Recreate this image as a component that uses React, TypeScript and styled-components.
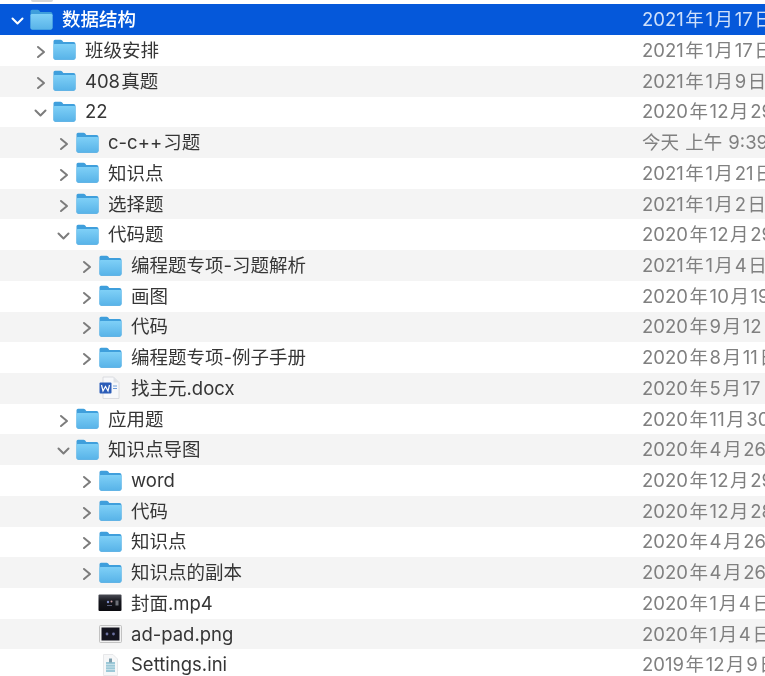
import React from "react";
import styled, { createGlobalStyle } from "styled-components";

const Global = createGlobalStyle`
  html, body { margin: 0; padding: 0; background: #fff; overflow: hidden; }
  #root { width: 765px; height: 676px; overflow: hidden; }
`;

const Page = styled.div`
  width: 765px;
  height: 676px;
  overflow: hidden;
  font-family: "Inter", "Noto Sans CJK SC", sans-serif;
  filter: blur(0.45px);
`;

const ClippedRow = styled.div`
  height: 4.4px;
  padding-left: 31px;
  overflow: hidden;
`;

const ClippedIcon = styled.div`
  width: 22px;
  height: 2px;
  border-radius: 0 0 2px 2px;
  background: #d6d6d6;
`;

const RowBox = styled.div<{ $tone: "sel" | "odd" | "even" }>`
  height: 30.72px;
  display: grid;
  grid-template-columns: 642px 123px;
  align-items: center;
  white-space: nowrap;
  overflow: hidden;
  background: ${(p) => (p.$tone === "sel" ? "#0558da" : p.$tone === "even" ? "#f4f4f4" : "#fff")};
`;

const NameCell = styled.div<{ $depth: number }>`
  display: flex;
  align-items: center;
  padding-left: ${(p) => 9 + p.$depth * 23}px;
`;

const ChevronBox = styled.span`
  width: 15px;
  height: 15px;
  margin-right: 5px;
  display: block;
  flex: none;
`;

const IconBox = styled.span`
  width: 25px;
  height: 24px;
  margin-right: 8px;
  display: block;
  flex: none;
`;

const Name = styled.span<{ $sel: boolean }>`
  font-size: 18.5px;
  line-height: 24px;
  padding-bottom: 1px;
  word-spacing: -4px;
  font-weight: ${(p) => (p.$sel ? 500 : 400)};
  color: ${(p) => (p.$sel ? "#fff" : "#363636")};
`;

const DateCell = styled.span<{ $sel: boolean }>`
  font-size: 18.5px;
  line-height: 24px;
  padding-bottom: 1px;
  word-spacing: -3.6px;
  color: ${(p) => (p.$sel ? "#cfe0fa" : "#808080")};
`;

const Chevron = ({ open, sel }: { open: boolean; sel: boolean }) => (
  <ChevronBox>
    <svg width="15" height="15" viewBox="0 0 15 15" fill="none"
      stroke={sel ? "#fff" : "#7c7c7c"} strokeWidth="2" strokeLinecap="round" strokeLinejoin="round">
      {open ? <path d="M3.5 5.5 L8.5 10.5 L13.5 5.5" /> : <path d="M6 3 L12 8 L6 13" />}
    </svg>
  </ChevronBox>
);

const Folder = ({ id }: { id: string }) => (
  <IconBox>
    <svg width="25" height="24" viewBox="0 0 25 24">
      <defs>
        <linearGradient id={id} x1="0" y1="0" x2="0" y2="1">
          <stop offset="0" stopColor="#7fd0f7" />
          <stop offset="1" stopColor="#58b3e8" />
        </linearGradient>
      </defs>
      <path d="M1.5 3.2 Q1.5 1.7 3 1.7 H8.5 Q9.5 1.7 10.2 2.6 L11.3 3.9 H21.5 Q23.5 3.9 23.5 5.9 V20 Q23.5 21.7 21.5 21.7 H3.3 Q1.5 21.7 1.5 20 Z" fill="#3f9fdc" />
      <path d="M1.5 7.3 Q1.5 5.9 3 5.9 H22 Q23.5 5.9 23.5 7.3 V19.8 Q23.5 21.5 21.6 21.5 H3.4 Q1.5 21.5 1.5 19.8 Z" fill={`url(#${id})`} />
    </svg>
  </IconBox>
);

const WordIcon = () => (
  <IconBox>
    <svg width="25" height="24" viewBox="0 0 25 24">
      <path d="M5 1 H15.5 L21 6.5 V22.5 H5 Z" fill="#f7f8fa" stroke="#d4d6da" strokeWidth="0.8" />
      <path d="M15.5 1 V6.5 H21 Z" fill="#dfe2e6" />
      <rect x="1.5" y="6.5" width="12" height="11" rx="1" fill="#2b5cb8" />
      <path d="M3.5 9 L5 15 L7.5 10.5 L10 15 L11.5 9" fill="none" stroke="#fff" strokeWidth="1.2" />
      <path d="M15 10 H19 M15 12.5 H19" stroke="#6e9bd8" strokeWidth="1.2" />
    </svg>
  </IconBox>
);

const VideoIcon = () => (
  <IconBox>
    <svg width="25" height="24" viewBox="0 0 25 24">
      <defs>
        <linearGradient id="vidTop" x1="0" y1="0" x2="0" y2="1">
          <stop offset="0" stopColor="#4a4c55" />
          <stop offset="0.4" stopColor="#17181f" />
          <stop offset="1" stopColor="#0b0b10" />
        </linearGradient>
      </defs>
      <rect x="0.5" y="3.5" width="23" height="16.5" rx="1" fill="url(#vidTop)" />
      <circle cx="10" cy="11" r="1.2" fill="#7d8cc8" />
      <circle cx="13.5" cy="10.5" r="1" fill="#c9a0a8" />
      <rect x="17.5" y="9.5" width="3" height="5" fill="#6d7078" />
      <rect x="9" y="14" width="5" height="1" fill="#5a5f78" />
    </svg>
  </IconBox>
);

const ImageIcon = () => (
  <IconBox>
    <svg width="25" height="24" viewBox="0 0 25 24">
      <rect x="1.5" y="3.5" width="22" height="17" rx="1" fill="#f1f1f1" stroke="#b5b5b5" strokeWidth="0.8" />
      <rect x="3.5" y="5.5" width="18" height="13" fill="#14141f" />
      <circle cx="9" cy="12" r="1.4" fill="#6a70a0" />
      <circle cx="15.5" cy="12" r="1.4" fill="#6a70a0" />
    </svg>
  </IconBox>
);

const IniIcon = () => (
  <IconBox>
    <svg width="25" height="24" viewBox="0 0 25 24">
      <path d="M5.5 1.5 H15 L19.5 6 V22.5 H5.5 Z" fill="#f6f7f8" stroke="#e2e3e6" strokeWidth="0.8" />
      <rect x="8" y="9" width="9" height="10" fill="#9cc9d8" />
      <path d="M8 11.5 H17 M8 14 H17 M8 16.5 H17" stroke="#d0e6ee" strokeWidth="0.8" />
      <rect x="11" y="5.5" width="3" height="4" fill="#7f9fae" />
    </svg>
  </IconBox>
);

type Kind = "closed" | "open" | "docx" | "mp4" | "png" | "ini";
const rows: [number, Kind, string, string][] = [
  [0, "open", "数据结构", "2021 年 1 月 17 日"],
  [1, "closed", "班级安排", "2021 年 1 月 17 日"],
  [1, "closed", "408 真题", "2021 年 1 月 9 日"],
  [1, "open", "22", "2020 年 12 月 29 日"],
  [2, "closed", "c-c++ 习题", "今天\u2004上午\u20049:39"],
  [2, "closed", "知识点", "2021 年 1 月 21 日"],
  [2, "closed", "选择题", "2021 年 1 月 2 日"],
  [2, "open", "代码题", "2020 年 12 月 29 日"],
  [3, "closed", "编程题专项-习题解析", "2021 年 1 月 4 日"],
  [3, "closed", "画图", "2020 年 10 月 19 日"],
  [3, "closed", "代码", "2020 年 9 月 12 日"],
  [3, "closed", "编程题专项-例子手册", "2020 年 8 月 11 日"],
  [3, "docx", "找主元.docx", "2020 年 5 月 17 日"],
  [2, "closed", "应用题", "2020 年 11 月 30 日"],
  [2, "open", "知识点导图", "2020 年 4 月 26 日"],
  [3, "closed", "word", "2020 年 12 月 29 日"],
  [3, "closed", "代码", "2020 年 12 月 28 日"],
  [3, "closed", "知识点", "2020 年 4 月 26 日"],
  [3, "closed", "知识点的副本", "2020 年 4 月 26 日"],
  [3, "mp4", "封面.mp4", "2020 年 1 月 4 日"],
  [3, "png", "ad-pad.png", "2020 年 1 月 4 日"],
  [3, "ini", "Settings.ini", "2019 年 12 月 9 日"],
];

const Spacer = styled.span`
  width: 15px;
  margin-right: 5px;
  flex: none;
`;

export default function App() {
  return (
    <Page>
      <Global />
      <ClippedRow><ClippedIcon /></ClippedRow>
      {rows.map(([depth, kind, name, date], i) => {
        const sel = i === 0;
        const tone = sel ? "sel" : i % 2 === 0 ? "even" : "odd";
        const isFolder = kind === "open" || kind === "closed";
        return (
          <RowBox key={i} $tone={tone}>
            <NameCell $depth={depth}>
              {isFolder ? <Chevron open={kind === "open"} sel={sel} /> : <Spacer />}
              {isFolder && <Folder id={`f${i}`} />}
              {kind === "docx" && <WordIcon />}
              {kind === "mp4" && <VideoIcon />}
              {kind === "png" && <ImageIcon />}
              {kind === "ini" && <IniIcon />}
              <Name $sel={sel}>{name}</Name>
            </NameCell>
            <DateCell $sel={sel}>{date}</DateCell>
          </RowBox>
        );
      })}
    </Page>
  );
}
